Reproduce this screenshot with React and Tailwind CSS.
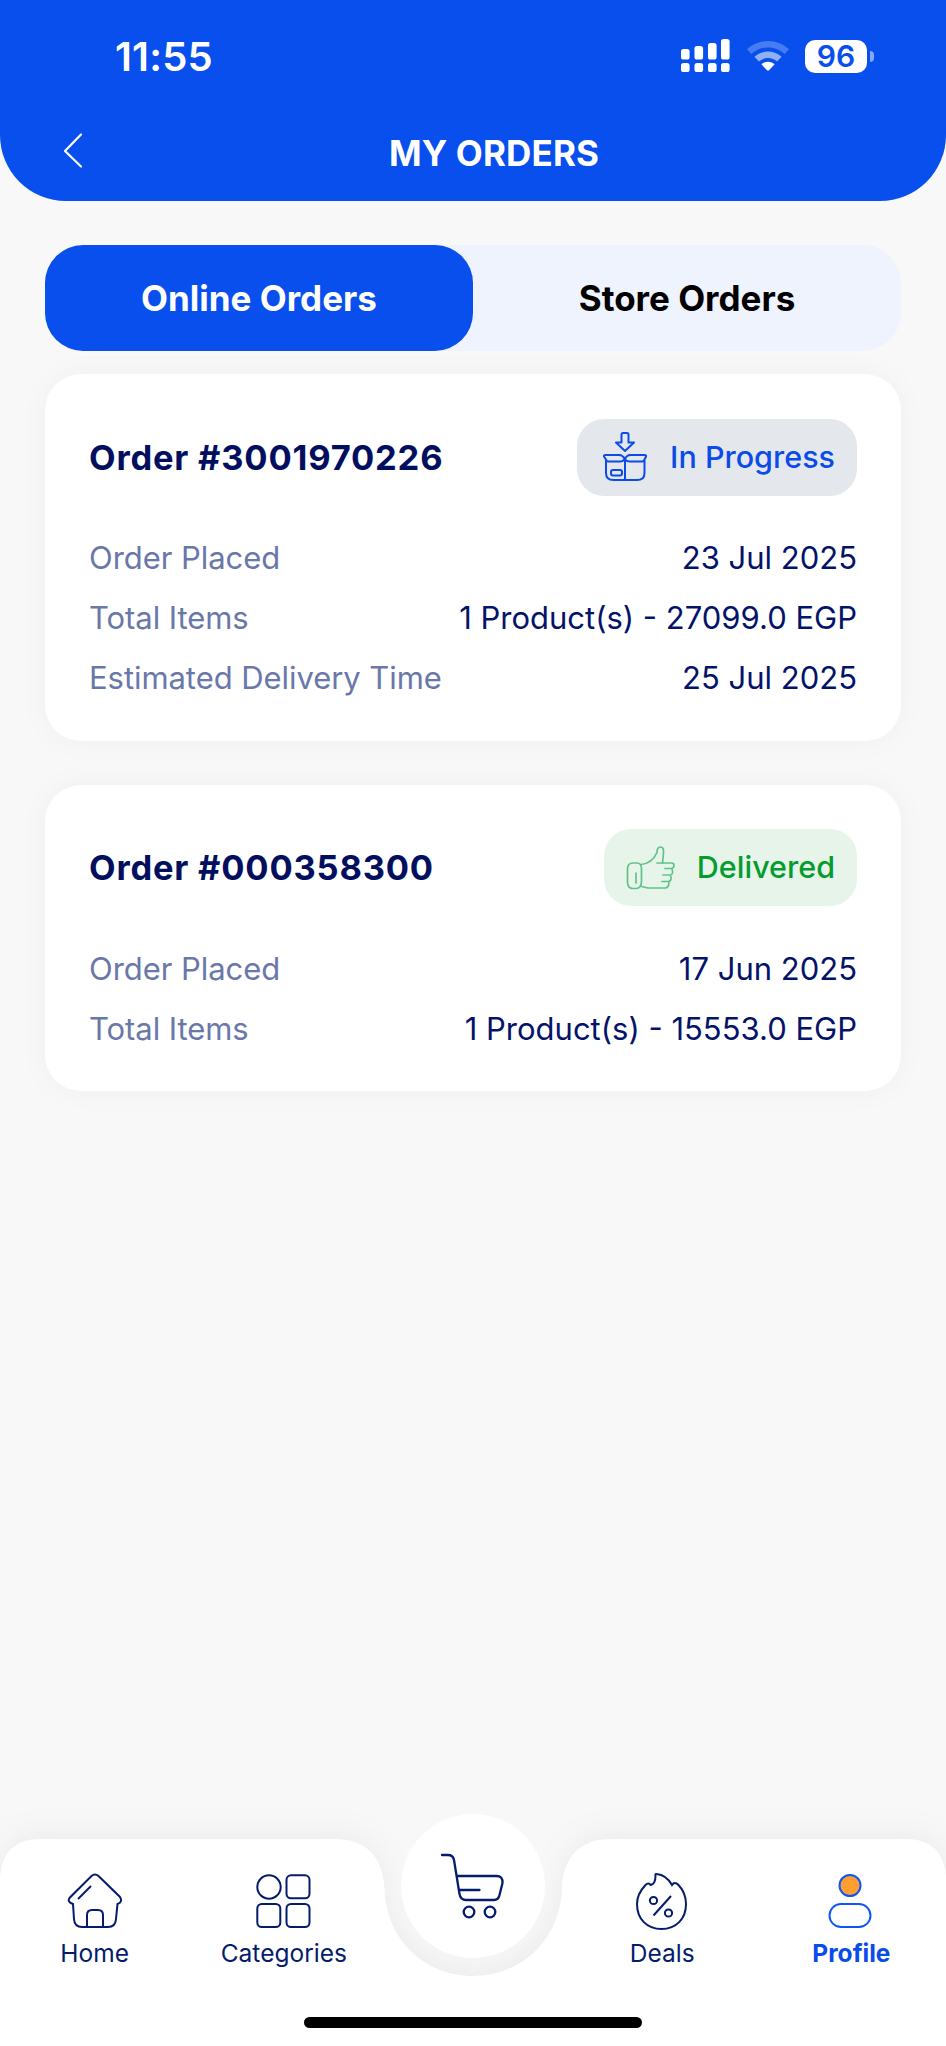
import { clsx } from "clsx";

function SignalIcon() {
  const bars = [
    { x: 0, y: 10 },
    { x: 13.5, y: 7 },
    { x: 27, y: 4 },
    { x: 40, y: 0 },
  ];
  return (
    <svg width="49" height="34" viewBox="0 0 49 34" fill="#fff">
      {bars.map((bar) => (
        <g key={bar.x}>
          <rect x={bar.x} y={bar.y} width="8.6" height={20.5 - bar.y} rx="2.6" />
          <rect x={bar.x} y="24" width="8.6" height="9" rx="2.6" />
        </g>
      ))}
    </svg>
  );
}

function WifiIcon() {
  return (
    <svg width="44" height="32" viewBox="0 0 44 32" fill="#fff">
      <path
        d="M22 1C30.200 1 37.600 4.100 43 9.200L38.600 13.900C34.300 9.800 28.500 7.400 22 7.400S9.700 9.800 5.400 13.900L1 9.200C6.400 4.100 13.800 1 22 1Z"
        opacity=".25"
      />
      <path
        d="M22 11.500C27.300 11.500 32 13.500 35.600 16.800L31.100 21.600C28.700 19.400 25.500 18 22 18S15.300 19.400 12.900 21.600L8.400 16.800C12 13.500 16.700 11.500 22 11.500Z"
        opacity=".55"
      />
      <path d="M22 21.700C24.600 21.700 26.900 22.700 28.600 24.300L23 30.300C22.400 30.900 21.600 30.900 21 30.300L15.400 24.300C17.100 22.700 19.400 21.700 22 21.700Z" />
    </svg>
  );
}

function StatusBar() {
  return (
    <div className="flex h-[112px] items-center justify-between pl-[115px] pr-[72px]">
      <span className="pt-[2px] text-[40px] font-semibold leading-none tracking-[0.2px]">
        11:55
      </span>
      <div className="flex items-center">
        <SignalIcon />
        <div className="ml-[16px]">
          <WifiIcon />
        </div>
        <div className="ml-[15px] flex h-[33px] w-[62px] items-center justify-center rounded-[10px] bg-white text-[30px] font-semibold leading-none text-[#084fed]">
          96
        </div>
        <div className="ml-[3px] h-[11px] w-[4px] rounded-r-full bg-white/50" />
      </div>
    </div>
  );
}

function Header() {
  return (
    <header className="h-[201px] rounded-b-[66px] bg-[#084fed] text-white">
      <StatusBar />
      <div className="flex items-start px-[62px] pt-[19px]">
        <svg
          width="22"
          height="38"
          viewBox="0 0 22 38"
          fill="none"
          stroke="#fff"
          strokeWidth="2.2"
          strokeLinecap="round"
          strokeLinejoin="round"
        >
          <path d="M19 3.500L3 20L19 35.500" />
        </svg>
        <h1 className="flex-1 pl-[20px] text-center text-[35px] font-bold leading-[44px] tracking-[0.15px]">
          MY ORDERS
        </h1>
      </div>
    </header>
  );
}

function BoxIcon() {
  return (
    <svg
      width="44"
      height="50"
      viewBox="0 0 44 50"
      fill="none"
      stroke="#0a4bea"
      strokeWidth="2"
      strokeLinejoin="round"
      strokeLinecap="round"
    >
      <path d="M18.500 2.500Q18.500 1 20 1H24Q25.500 1 25.500 2.500V10.500H31L22 19L13 10.500H18.500Z" />
      <path d="M3 27.500L1 24.500Q0.500 23 2.500 23H16.500Q19.500 23 21.800 27Q24 23 27 23H41.500Q43.500 23 43 24.500L41 28.500Q40.500 29.500 39 29.500H26.500Q23.500 29.500 21.800 27Q20 29.500 17.500 29.500H5Q3.500 29.500 3 27.500Z" />
      <path d="M3 29V41Q3 48 10.500 48H34Q41.500 48 41.500 41V29M22 28V48" />
      <rect x="8" y="38" width="11" height="5.500" rx="2" />
    </svg>
  );
}

function ThumbIcon() {
  return (
    <svg
      width="49"
      height="44"
      viewBox="0 0 49 44"
      fill="none"
      stroke="#5fc389"
      strokeWidth="1.7"
      strokeLinejoin="round"
      strokeLinecap="round"
    >
      <path d="M7 17H11Q15.500 17 15.500 23V35Q15.500 42.500 10 42.500H7Q1.500 42.500 1.500 36V23Q1.500 17 7 17Z" />
      <path d="M10 27V37" />
      <path d="M15 18.500Q26 17.500 31 6.500Q31 1 34.500 1Q38 1 37.500 7L36.500 17H45.500Q48 17 48 19.500Q48 22 45.500 22.500H39" />
      <path d="M31 17H36.500M46 23Q48 29 43.500 29H37M44.500 29Q46.500 35 42 35.500H36M43 36Q43 42 39 42H22L15.500 40.500" />
    </svg>
  );
}

const orders = [
  {
    id: "3001970226",
    status: "In Progress",
    icon: BoxIcon,
    badge: "bg-[#e4e8ed] text-[#0a4bea] pl-[26px] pr-[22px] gap-[23px]",
    rows: [
      { label: "Order Placed", value: "23 Jul 2025" },
      { label: "Total Items", value: "1 Product(s) - 27099.0 EGP" },
      { label: "Estimated Delivery Time", value: "25 Jul 2025" },
    ],
  },
  {
    id: "000358300",
    status: "Delivered",
    icon: ThumbIcon,
    badge: "bg-[#e6f4ea] text-[#049c2e] pl-[22px] pr-[22px] gap-[22px]",
    rows: [
      { label: "Order Placed", value: "17 Jun 2025" },
      { label: "Total Items", value: "1 Product(s) - 15553.0 EGP" },
    ],
  },
];

function OrderCard({ order }) {
  const Icon = order.icon;
  return (
    <article className="rounded-[36px] bg-white px-[44px] pb-[32px] pt-[44.5px] shadow-[0_0_30px_rgba(0,0,0,0.04)]">
      <div className="flex items-center justify-between">
        <h2 className="pt-[2px] text-[34.5px] font-bold leading-none tracking-[0.8px] text-[#020f5e]">
          Order #{order.id}
        </h2>
        <div
          className={clsx(
            "flex h-[77px] items-center rounded-[27px] text-[30.5px] font-medium leading-none",
            order.badge
          )}
        >
          <Icon />
          <span>{order.status}</span>
        </div>
      </div>
      <dl className="mt-[33px]">
        {order.rows.map((row) => (
          <div
            key={row.label}
            className="flex h-[60px] items-center justify-between text-[31px]"
          >
            <dt className="tracking-[-0.06px] text-[#6a77a9]">{row.label}</dt>
            <dd className="text-[#04136a]">{row.value}</dd>
          </div>
        ))}
      </dl>
    </article>
  );
}

function HomeIcon() {
  return (
    <svg width="56" height="58" viewBox="0 0 56 58" strokeWidth="2">
      <path d="M6 32Q0 30 2.500 26L24.500 4Q28 1 31.500 4L53 25Q56 30 50.500 32L49 47Q48.500 55 41 55H15Q7.500 55 7 47Z" />
      <path d="M20 55V43Q20 38 25 38H31Q36 38 36 43V55" />
      <path d="M11 27L24 14" />
    </svg>
  );
}

function CategoriesIcon() {
  return (
    <svg width="56" height="58" viewBox="0 0 56 58" strokeWidth="2">
      <circle cx="13" cy="15" r="11.700" />
      <rect x="30.500" y="3.300" width="23" height="23" rx="4.500" />
      <rect x="1.300" y="32" width="23" height="23" rx="4.500" />
      <rect x="30.500" y="32" width="23" height="23" rx="4.500" />
    </svg>
  );
}

function DealsIcon() {
  return (
    <svg width="56" height="58" viewBox="0 0 56 58" strokeWidth="2">
      <path d="M22.500 2Q32.500 3 38 13Q40.500 9 44.500 13Q52 21 52 32C52 47 42 57 27.500 57S3 47 3 32Q3 22 11.500 13Q14.500 10 16.500 13Q21.500 12 21.500 4Q21 1.500 22.500 2Z" />
      <circle cx="19.500" cy="28.500" r="3.600" />
      <circle cx="34.500" cy="41" r="3.600" />
      <path d="M37 24L19.500 43.500" />
    </svg>
  );
}

function ProfileIcon() {
  return (
    <svg width="56" height="58" viewBox="0 0 56 58" strokeWidth="2">
      <circle cx="27" cy="13.500" r="10.500" fill="#ff9f32" />
      <rect x="6.500" y="32" width="41" height="23" rx="11.500" />
    </svg>
  );
}

function CartIcon() {
  return (
    <svg
      width="66"
      height="68"
      viewBox="0 0 66 68"
      fill="none"
      stroke="#041c6b"
      strokeWidth="2.300"
      strokeLinecap="round"
      strokeLinejoin="round"
    >
      <path d="M2 3H8Q13 3 14 8L19.500 42Q20.500 48 26 48H54Q58.500 48 59.500 43L62.500 31Q63 24 56.500 24H17" />
      <path d="M19 38H39.500" />
      <circle cx="29" cy="60" r="5.300" />
      <circle cx="50" cy="60" r="5.300" />
    </svg>
  );
}

function NavItem({ icon: Icon, label, active }) {
  return (
    <a
      className={clsx(
        "flex flex-1 flex-col items-center fill-none pt-[33px] text-[24.5px]",
        active
          ? "stroke-[#0f56f5] font-bold text-[#0a4bea]"
          : "stroke-[#041c6b] text-[#041c6b]"
      )}
    >
      <Icon />
      <span className="mt-[8px] stroke-none leading-[30px]">{label}</span>
    </a>
  );
}

function BottomNav() {
  return (
    <nav className="relative h-[207px]">
      <svg
        className="absolute inset-0 overflow-visible drop-shadow-[0_-4px_16px_rgba(0,0,0,0.05)]"
        width="946"
        height="207"
        viewBox="0 0 946 207"
        fill="#fff"
      >
        <path d="M0 207V38Q3 0 40 0H335C366 0 383 18 384.500 50C386 100 424 137 473 137S560 100 562 50C563 18 580 0 611 0H906Q943 0 946 38V207Z" />
      </svg>
      <div className="relative flex h-[178px]">
        <NavItem icon={HomeIcon} label="Home" />
        <NavItem icon={CategoriesIcon} label="Categories" />
        <div className="flex flex-1 justify-center">
          <a className="-mt-[25px] flex h-[144px] w-[144px] items-center justify-center rounded-full bg-white">
            <CartIcon />
          </a>
        </div>
        <NavItem icon={DealsIcon} label="Deals" />
        <NavItem icon={ProfileIcon} label="Profile" active />
      </div>
      <div className="relative mx-auto h-[11px] w-[338px] rounded-full bg-black" />
    </nav>
  );
}

function App() {
  return (
    <div className="flex h-[2046px] w-[946px] flex-col overflow-hidden bg-[#f8f8f8] font-['Inter',sans-serif]">
      <Header />
      <main className="flex-1 px-[45px] pt-[44px]">
        <div className="flex h-[106px] rounded-[38px] bg-[#eff3fe] text-[35px] font-bold text-black">
          <button className="w-1/2 rounded-[38px] bg-[#084fed] pt-px text-white">
            Online Orders
          </button>
          <button className="w-1/2 pt-px">Store Orders</button>
        </div>
        <section className="mt-[23px] flex flex-col gap-[44px]">
          {orders.map((order) => (
            <OrderCard key={order.id} order={order} />
          ))}
        </section>
      </main>
      <BottomNav />
    </div>
  );
}

export default App;
